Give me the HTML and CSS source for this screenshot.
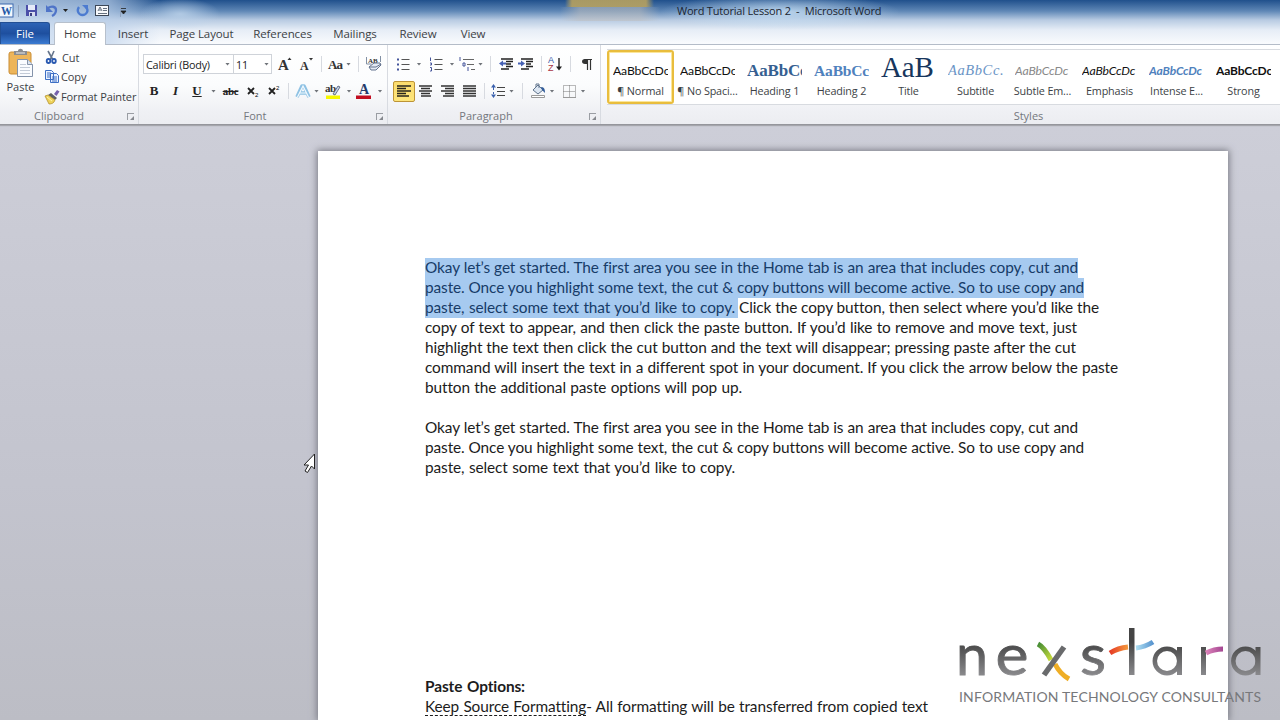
FILE: index.html
```html
<!DOCTYPE html>
<html lang="en">
<head>
<meta charset="utf-8">
<title>Word Tutorial Lesson 2 - Microsoft Word</title>
<link rel="stylesheet" href="styles.css">
</head>
<body>
<div class="app">
  <header class="chrome">
    <div class="titlebar">
      <div class="quick">
        <svg width="130" height="22" viewBox="0 0 130 22">
          <rect x="-2" y="4" width="15" height="13" fill="#f4f8fd" stroke="#3c68ae"/>
          <text x="1" y="15" class="w-logo" textLength="11" lengthAdjust="spacingAndGlyphs">W</text>
          <path d="M18.5 5v12M120.500 5v12" stroke="#8fa2bd"/>
          <path d="M26 5h11v11H26z" fill="#4b4fa8"/><path d="M28 5h7v5h-7z" fill="#e6eaf8"/><path d="M29 12h6v4h-6z" fill="#d8dcef"/><path d="M30 13h2v3h-2z" fill="#3a3f80"/>
          <path d="M48 8c3-2 8-2 8 2 0 3-2 5-4 6" fill="none" stroke="#4f74c8" stroke-width="2.300"/><path d="M46 5v7h7z" fill="#4f74c8"/>
          <path d="M63 9h5l-2.500 3z" fill="#222"/>
          <path d="M79 7c-3 4 0 8 3.500 8s7-4 3.500-8" fill="none" stroke="#4c7bd0" stroke-width="2.300"/><path d="M82 5h6v6z" fill="#4c7bd0"/>
          <rect x="95.500" y="5.500" width="13" height="10" fill="#f7f9fc" stroke="#3d4858"/>
          <path d="M98 11l2-4 2 4M99 10h2M103 8.500h4M103 10.500h4M98 13.500h9" fill="none" stroke="#536070" stroke-width=".9"/>
          <path d="M121 8.500h5M121 11h5l-2.500 3z" fill="#222" stroke="#222" stroke-width=".8"/>
        </svg>
      </div>
      <div class="title">Word Tutorial Lesson 2 &nbsp;-&nbsp; Microsoft Word</div>
    </div>
    <nav class="tabs">
      <span class="file">File</span><span class="tab active">Home</span><span class="tab t-insert">Insert</span><span class="tab t-layout">Page Layout</span><span class="tab t-ref">References</span><span class="tab t-mail">Mailings</span><span class="tab t-review">Review</span><span class="tab t-view">View</span>
    </nav>
  </header>

  <section class="ribbon">
    <div class="group clipboard">
      <div class="group-body clip-body">
        <div class="paste">
          <svg width="26" height="30" viewBox="0 0 26 30">
            <rect x="1" y="4" width="22" height="22" rx="2" fill="#edb55a" stroke="#c98d35"/>
            <path d="M6 7V3h4c0-3 5-3 5 0h4v4z" fill="#8a8c90"/><path d="M8 5h9" stroke="#e8e8e8"/>
            <path d="M9.500 11.500h10l5 5v12h-15z" fill="#fafcff" stroke="#8493aa"/><path d="M19.500 11.500v5h5" fill="#dbe3ee" stroke="#8493aa"/>
            <path d="M12 16.500h6M12 19.500h10M12 22.500h10M12 25.500h10" stroke="#c3cbd7"/>
          </svg>
          <span>Paste</span><i class="caret"></i>
        </div>
        <div class="clip-list">
          <div class="clip-row cut"><svg width="16" height="16" viewBox="0 0 16 16"><path d="M5 2l5 9M11 2l-4 9" stroke="#65758c" stroke-width="1.600"/><ellipse cx="5.500" cy="12" rx="1.800" ry="2" fill="none" stroke="#2858b0" stroke-width="1.800"/><ellipse cx="11" cy="12" rx="1.800" ry="2" fill="none" stroke="#2858b0" stroke-width="1.800"/></svg><span>Cut</span></div>
          <div class="clip-row copy"><svg width="16" height="16" viewBox="0 0 16 16"><path d="M1.500 2.500h6l2 2v7h-8zM6.500 5.500h6l2 2v7h-8z" fill="#eaf2ff" stroke="#3d6fc4"/><path d="M3 5h4M3 7h3M3 9h3M8 9h5M8 11h5M8 13h5" stroke="#3d6fc4"/></svg><span>Copy</span></div>
          <div class="clip-row painter"><svg width="16" height="16" viewBox="0 0 16 16"><path d="M10 5l3-4 2.500 1.500-3 4.500z" fill="#7560ac"/><path d="M7 4l6 5-2 2-7-5z" fill="#5e6064"/><path d="M4 6l7 5c-1 3-3 4-6 4L1 7z" fill="#eed25a" stroke="#ae8a25" stroke-width=".7"/><path d="M3 8l5 4" stroke="#fff6ae"/></svg><span>Format Painter</span></div>
        </div>
      </div>
      <div class="group-label">Clipboard<i class="launch"></i></div>
    </div>

    <div class="group font">
      <div class="group-body">
        <div class="row font-a">
          <span class="combo">Calibri (Body)<i class="caret"></i></span>
          <span class="combo size">11<i class="caret"></i></span>
          <svg width="16" height="18" viewBox="0 0 16 18"><text x="1" y="15" class="serif" font-size="15">A</text><path d="M10.500 5h4l-2-2.500z" fill="#333"/></svg>
          <svg width="16" height="18" viewBox="0 0 16 18"><text x="1" y="15" class="serif" font-size="12">A</text><path d="M10 3h4l-2 2.500z" fill="#333"/></svg>
          <i class="sep"></i>
          <svg width="18" height="18" viewBox="0 0 18 18"><text x="2" y="14" class="serif" font-size="13" textLength="15">Aa</text></svg>
          <i class="caret"></i><i class="sep"></i>
          <svg width="18" height="18" viewBox="0 0 18 18"><text x="3" y="8" class="serif" font-size="7">AB</text><path d="M1.500 2v7h5M15.500 1v6" fill="none" stroke="#8290a4"/><path d="M4 12l5-4h6l1 2-5 5H6z" fill="#e5eaf4" stroke="#65748f"/><path d="M4 12h7l5-3" fill="none" stroke="#65748f"/></svg>
        </div>
        <div class="row font-b">
          <b class="ser">B</b><i class="ser">I</i><u class="ser">U</u><i class="caret"></i>
          <s class="ser abc">abc</s>
          <svg width="16" height="16" viewBox="0 0 16 16"><path d="M3 5l6 6M9 5l-6 6" stroke="#222" stroke-width="1.800"/><text x="10" y="14" font-size="6" class="num">2</text></svg>
          <svg width="16" height="16" viewBox="0 0 16 16"><path d="M3 5l6 6M9 5l-6 6" stroke="#222" stroke-width="1.800"/><text x="10" y="7" font-size="6" class="num">2</text></svg>
          <i class="sep"></i>
          <svg width="18" height="18" viewBox="0 0 18 18"><path d="M3 15L8 4h2l5 11M5 11h8" fill="none" stroke="#8fc2e4" stroke-width="3.600" stroke-linejoin="round"/><path d="M3.500 15L9 4l5.500 11M6 11h6" fill="none" stroke="#f4fbff" stroke-width="1.200"/></svg>
          <i class="caret"></i>
          <svg width="18" height="18" viewBox="0 0 18 18"><path d="M2 13.500h14v3.500H2z" fill="#f7f700"/><text x="1" y="10" class="serif" font-size="11" textLength="11">ab</text><path d="M9 12l5-8 2 1-5 8z" fill="#c5d3ea" stroke="#49566e" stroke-width=".8"/></svg>
          <i class="caret"></i>
          <svg width="18" height="18" viewBox="0 0 18 18"><text x="4" y="12" class="serif" font-size="14" fill="#263b6c">A</text><path d="M1 13.500h15v3.500H1z" fill="#c20d20"/></svg>
          <i class="caret"></i>
        </div>
      </div>
      <div class="group-label">Font<i class="launch"></i></div>
    </div>

    <div class="group para">
      <div class="group-body">
        <div class="row para-a">
          <svg width="16" height="16" viewBox="0 0 16 16"><path d="M5.500 3.500h8M5.500 8.500h8M5.500 13.500h8" stroke="#555"/><path d="M1 2.500h2v2H1zM1 7.500h2v2H1zM1 12.500h2v2H1z" fill="#44549b"/></svg>
          <i class="caret"></i>
          <svg width="16" height="16" viewBox="0 0 16 16"><path d="M6.500 3.500h8M6.500 8.500h8M6.500 13.500h8" stroke="#555"/><path d="M2.500 1.500v3.500M2 7h1.500v2H2M2 11.500h1.500v3.500H2" fill="none" stroke="#44549b"/></svg>
          <i class="caret"></i>
          <svg width="18" height="16" viewBox="0 0 18 16"><path d="M5 3.500h11M9 8.500h7M13 13.500h4" stroke="#666"/><path d="M2 1v4M5 7h2v3H5zM10 11v4" fill="none" stroke="#44549b"/></svg>
          <i class="caret"></i><i class="sep"></i>
          <svg width="16" height="16" viewBox="0 0 16 16"><path d="M3 3h12M8 5.500h7M8 8h5M8 10.500h7M3 13h8" stroke="#222" stroke-width="1.500"/><path d="M1 7.500l4-3v2h3v2H5v2z" fill="#4560b4"/></svg>
          <svg width="16" height="16" viewBox="0 0 16 16"><path d="M3 3h12M8 5.500h7M8 8h5M8 10.500h7M3 13h8" stroke="#222" stroke-width="1.500"/><path d="M7 7.500l-4-3v2H0v2h3v2z" fill="#4560b4"/></svg>
          <i class="sep"></i>
          <svg width="16" height="18" viewBox="0 0 16 18"><text x="1" y="8" font-size="9" class="num" fill="#3558a8">A</text><text x="1" y="16" font-size="9" class="num" fill="#a83545">Z</text><path d="M12 3v10" stroke="#222" stroke-width="1.400"/><path d="M9 11.500h6l-3 4z" fill="#222"/></svg>
          <i class="sep"></i>
          <svg width="12" height="16" viewBox="0 0 12 16"><path d="M6 3H4C0 3 0 8 4 8h2z" fill="#333"/><path d="M3.500 3.500H11M6.500 3v11M9.500 3v11" fill="none" stroke="#333" stroke-width="1.200"/></svg>
        </div>
        <div class="row para-b">
          <span class="chosen"><svg width="16" height="16" viewBox="0 0 16 16"><path d="M1 3h14M1 5.500h9M1 8h14M1 10.500h9M1 13h12" stroke="#28261d" stroke-width="1.300"/></svg></span>
          <svg width="16" height="16" viewBox="0 0 16 16"><path d="M1 3h13M3 5.500h9M1 8h13M3 10.500h9M3 13h10" stroke="#333" stroke-width="1.300"/></svg>
          <svg width="16" height="16" viewBox="0 0 16 16"><path d="M1 3h13M5 5.500h9M1 8h13M5 10.500h9M3 13h11" stroke="#333" stroke-width="1.300"/></svg>
          <svg width="16" height="16" viewBox="0 0 16 16"><path d="M1 3h13M1 5.500h13M1 8h13M1 10.500h13M1 13h13" stroke="#333" stroke-width="1.300"/></svg>
          <i class="sep"></i>
          <svg width="16" height="16" viewBox="0 0 16 16"><path d="M7 4.500h8M7 8.500h8M7 12.500h8" stroke="#444" stroke-width="1.200"/><path d="M3.500 1L6 4.500H1zM3.500 15L6 11.500H1zM3 4h1v3H3zM3 9h1v3H3z" fill="#3b61ae"/></svg>
          <i class="caret"></i><i class="sep"></i>
          <svg width="18" height="18" viewBox="0 0 18 18"><path d="M4 8l5-5 5 5-5 4z" fill="#dce6f2" stroke="#61758d"/><path d="M7 5V2h3v4" fill="none" stroke="#61758d"/><path d="M12 5c3 0 4 2 4 6l-3-3z" fill="#345e9b"/><path d="M2.500 13.500h13v2h-13z" fill="#fff" stroke="#999"/></svg>
          <i class="caret"></i>
          <svg width="16" height="16" viewBox="0 0 16 16"><path d="M2.500 2.500h12v12h-12zM8.500 2.500v12M2.500 8.500h12" fill="none" stroke="#777" stroke-dasharray="1 1"/><path d="M2 14.500h13" stroke="#999"/></svg>
          <i class="caret"></i>
        </div>
      </div>
      <div class="group-label">Paragraph<i class="launch"></i></div>
    </div>

    <div class="group styles">
      <div class="gallery">
        <div class="style selected"><div class="sample">AaBbCcDc</div><span>¶ Normal</span></div>
        <div class="style"><div class="sample">AaBbCcDc</div><span>¶ No Spaci...</span></div>
        <div class="style"><div class="sample h1">AaBbCc</div><span>Heading 1</span></div>
        <div class="style"><div class="sample h2">AaBbCc</div><span>Heading 2</span></div>
        <div class="style"><div class="sample ttl">AaB</div><span>Title</span></div>
        <div class="style"><div class="sample sub">AaBbCc.</div><span>Subtitle</span></div>
        <div class="style"><div class="sample em pale">AaBbCcDc</div><span>Subtle Em...</span></div>
        <div class="style"><div class="sample em">AaBbCcDc</div><span>Emphasis</span></div>
        <div class="style"><div class="sample em intense">AaBbCcDc</div><span>Intense E...</span></div>
        <div class="style"><div class="sample strong">AaBbCcDc</div><span>Strong</span></div>
      </div>
      <div class="group-label">Styles</div>
    </div>
  </section>

  <main class="workspace">
    <article class="page">
      <div class="para-text">
        <p class="l1 sel">Okay let’s get started. The first area you see in the Home tab is an area that includes copy, cut and</p>
        <p class="l2 sel">paste. Once you highlight some text, the cut &amp; copy buttons will become active. So to use copy and</p>
        <div class="split"><p class="l3 sel">paste, select some text that you’d like to copy.</p><p class="l3b">Click the copy button, then select where you’d like the</p></div>
        <p class="l4">copy of text to appear, and then click the paste button. If you’d like to remove and move text, just</p>
        <p class="l5">highlight the text then click the cut button and the text will disappear; pressing paste after the cut</p>
        <p class="l6">command will insert the text in a different spot in your document. If you click the arrow below the paste</p>
        <p class="l7">button the additional paste options will pop up.</p>
      </div>
      <div class="para-text second">
        <p class="l1">Okay let’s get started. The first area you see in the Home tab is an area that includes copy, cut and</p>
        <p class="l2">paste. Once you highlight some text, the cut &amp; copy buttons will become active. So to use copy and</p>
        <p class="l3">paste, select some text that you’d like to copy.</p>
      </div>
      <div class="para-text options">
        <p class="l8">Paste Options:</p>
        <p class="l9"><span class="dash">Keep Source Formatting</span>- All formatting will be transferred from copied text</p>
      </div>
    </article>
  </main>

  <svg class="cursor" width="14" height="22" viewBox="0 0 14 22"><path d="M11.500 1v15l-3-3-4 6.500-2.500-1.500 3.500-6H1z" fill="#fff" stroke="#222"/></svg>

  <svg class="logo" width="310" height="84" viewBox="955 623 310 84" role="img" aria-label="nexstara">
    <defs>
      <linearGradient id="ink" gradientUnits="userSpaceOnUse" x1="0" y1="642" x2="0" y2="677"><stop offset="0" stop-color="#444"/><stop offset="1" stop-color="#8d8d90"/></linearGradient>
      <linearGradient id="green" x1="0" y1="0" x2="1" y2="1"><stop stop-color="#438b35"/><stop offset="1" stop-color="#c9dc3b"/></linearGradient>
      <linearGradient id="orange"><stop stop-color="#e63b26"/><stop offset="1" stop-color="#f49a3d"/></linearGradient>
      <linearGradient id="blue"><stop stop-color="#b0e0f3"/><stop offset="1" stop-color="#5794cf"/></linearGradient>
      <linearGradient id="pink"><stop stop-color="#dd83ba"/><stop offset="1" stop-color="#a34691"/></linearGradient>
    </defs>
    <g class="wordmark" fill="url(#ink)" stroke="url(#ink)" stroke-width=".8">
      <text x="956" y="675" textLength="32" lengthAdjust="spacingAndGlyphs">n</text>
      <text x="995.500" y="675" textLength="33" lengthAdjust="spacingAndGlyphs">e</text>
      <text x="1080" y="675" textLength="26" lengthAdjust="spacingAndGlyphs">s</text>
    </g>
    <path d="M1038 644q6 3 13 16" fill="none" stroke="url(#green)" stroke-width="5"/>
    <path d="M1055 664q5 10 14 15" fill="none" stroke="#efae26" stroke-width="5"/>
    <path d="M1064 647l-20 28" stroke="#696a6c" stroke-width="5.500"/>
    <path d="M1110 653q8-5 18-6" fill="none" stroke="url(#orange)" stroke-width="5"/>
    <path d="M1136 648q9-1 17-6" fill="none" stroke="url(#blue)" stroke-width="5"/>
    <path d="M1129 628h5.500v47h-5.500zM1201 647h5v28h-5zM1177 647h5v28h-5zM1255.500 647h5v28h-5z" fill="url(#ink)"/>
    <circle cx="1167" cy="661" r="12.200" fill="none" stroke="url(#ink)" stroke-width="4.500"/>
    <circle cx="1245.500" cy="661" r="12.200" fill="none" stroke="url(#ink)" stroke-width="4.500"/>
    <path d="M1206 653q8-4 17-4" fill="none" stroke="url(#pink)" stroke-width="5"/>
    <text class="tagline" x="959" y="701.500" textLength="302">INFORMATION TECHNOLOGY CONSULTANTS</text>
  </svg>
</div>
</body>
</html>
```
FILE: styles.css
```css
* { box-sizing: border-box; }
body { margin: 0; font-family: "Open Sans", "Noto Sans", sans-serif; font-size: 11px; color: #3c3f45; }
.app { position: relative; width: 1280px; height: 720px; overflow: hidden; display: flex; flex-direction: column; }

.chrome {
  flex: none; height: 45px; border-bottom: 1px solid #b4bcc8;
  background:
    linear-gradient(90deg, transparent 565px, rgba(183,161,95,.9) 572px, rgba(183,161,95,.9) 646px, transparent 654px) 0 0 / 100% 7px no-repeat,
    linear-gradient(90deg, transparent 560px, rgba(190,190,190,.55) 580px, rgba(190,190,190,.55) 640px, transparent 660px) 0 7px / 100% 14px no-repeat,
    radial-gradient(ellipse 120px 18px at 780px 12px, rgba(200,224,244,.85), transparent),
    radial-gradient(ellipse 40px 16px at 180px 14px, rgba(190,212,235,.8), transparent),
    linear-gradient(90deg, rgba(204,221,241,.75), rgba(190,210,235,.65) 110px, transparent 160px),
    linear-gradient(#20508c, #5f87b6 11px, #b8cbe2 20px, #e6edf6 30px, #f8fafd 43px);
}
.titlebar { height: 22px; display: flex; }
.quick { width: 677px; height: 22px; }
.w-logo { font: bold 13px "Liberation Serif", serif; fill: #2457a5; }
.title { color: #1b2430; line-height: 22px; white-space: nowrap; letter-spacing: -.2px; }
.tabs { height: 22px; display: flex; align-items: stretch; line-height: 23px; font-size: 11.500px; letter-spacing: -.1px; text-align: center; white-space: nowrap; }
.file { width: 50px; color: #fff; background: linear-gradient(#2d63b5, #1e4f9f 50%, #3b7bd2); border: 1px solid #224f94; border-bottom: 0; border-radius: 0 3px 0 0; line-height: 22px; }
.active { width: 52px; height: 23px; margin-left: 4px; background: #fff; border: 1px solid #b7c0cc; border-bottom: 0; border-radius: 3px 3px 0 0; line-height: 22px; }
.t-insert { width: 54px; }
.t-layout { width: 83px; }
.t-ref { width: 79px; }
.t-mail { width: 66px; }
.t-review { width: 60px; }
.t-view { width: 50px; }

.ribbon { position: relative; flex: none; height: 80px; display: flex; background: linear-gradient(#fff, #fbfcfd 50%, #eff0f4 85%, #ecedf1); border-bottom: 1px solid #95969c; box-shadow: 0 1px 1px #a5a6ac; }
.group { display: flex; flex-direction: column; justify-content: space-between; border-right: 1px solid #d8dbe1; }
.clipboard { width: 139px; }
.font { width: 249px; }
.para { width: 213px; }
.styles { flex: 1; min-width: 0; border: 0; padding-left: 6px; }
.group-body { height: 62px; padding: 8px 0 0 4px; }
.group-label { position: relative; height: 15px; line-height: 13px; text-align: center; color: #74777d; font-size: 11px; padding-right: 20px; }
.font .group-label, .para .group-label { padding-right: 16px; }
.styles .group-label { padding: 0 0 0 170px; }
.launch { position: absolute; right: 4px; top: 4px; width: 7px; height: 7px; border: solid #9a9da3; border-width: 1px 0 0 1px; }
.launch::after { content: ""; position: absolute; right: 0; bottom: 0; border: 2px solid #85888e; border-top-color: transparent; border-left-color: transparent; }

.clip-body { display: flex; padding: 3px 0 0 0; }
.paste { width: 41px; display: flex; flex-direction: column; align-items: center; line-height: 18px; }
.paste .caret { margin-top: 2px; }
.clip-list { display: flex; flex-direction: column; }
.clip-row { height: 20.500px; display: flex; align-items: center; white-space: nowrap; font-size: 11px; letter-spacing: -.1px; }
.clip-row svg { margin: 0 1px 0 3px; flex: none; }
.cut { height: 18px; }
.cut svg { margin-left: 2px; margin-right: 3px; }
.caret { width: 5px; height: 3px; background: #70747a; clip-path: polygon(0 0, 100% 0, 50% 100%); }
.sep { width: 1px; height: 16px; background: #d7dae0; }
.row { display: grid; align-items: center; justify-items: center; }
.font-a { height: 22px; grid-template-columns: 91px 38px 25px 20px 8px 20px 7px 12px 20px; }
.font-b { height: 22px; margin-top: 5px; grid-template-columns: 22px 21px 22px 11px 23px 21px 22px 7px 21px 7px 26px 6px 24px 8px; }
.para-a { height: 22px; margin-left: 1px; grid-template-columns: 22px 8px 26px 6px 23px 5px 14px 18px 21px 10px 18px 13px 19px; }
.para-b { height: 22px; margin: 5px 0 0 1px; grid-template-columns: 22px 22px 22px 22px 6px 21px 7px 14px 18px 10px 23px 6px; }
.combo { width: 100%; height: 20px; display: flex; align-items: center; justify-content: space-between; padding: 0 3px 0 2px; background: #fff; border: 1px solid #cfd3d9; white-space: nowrap; color: #222; font-size: 10.800px; letter-spacing: -.2px; }
.size { border-left: 0; padding-right: 2px; }
.ser, .serif { font-family: "Liberation Serif", serif; font-weight: bold; }
.serif:not([fill]) { fill: #333; }
.ser { color: #222; font-size: 13px; line-height: 16px; }
.abc { font-size: 11px; letter-spacing: -.3px; }
.num { font-family: "Liberation Sans", sans-serif; }
.chosen { width: 22px; height: 21px; display: flex; align-items: center; justify-content: center; background: linear-gradient(#fbdc6e, #fde57b); border: 1px solid #bd9436; border-radius: 2px; }

.gallery { height: 56px; margin-top: 4px; display: flex; border: solid #d8dbe0; border-width: 1px 0 1px 0; background: #fff; }
.style { flex: 0 0 67px; min-width: 0; height: 54px; display: flex; flex-direction: column; align-items: center; font-size: 10.800px; letter-spacing: -.15px; white-space: nowrap; }
.selected { border: 2px solid #e9bd3d; border-radius: 3px; box-shadow: inset 0 0 0 1px #fbe69b; }
.selected .sample { margin-top: -2px; }
.style > span { line-height: 18px; }
.sample { width: 55px; height: 32px; overflow: hidden; font: 12.200px/41px Lato, sans-serif; color: #111; }
.h1 { font: bold 17px/41px "Liberation Serif", serif; color: #365f91; }
.h2 { font: bold 15.500px/41px "Liberation Serif", serif; color: #4f81bd; }
.ttl { font: 29px/34px "Liberation Serif", serif; color: #17365d; }
.sub { font: italic 14.500px/41px "Liberation Serif", serif; color: #6a94c6; letter-spacing: .6px; }
.em { font-style: italic; }
.pale { color: #888; }
.intense { color: #4f81bd; font-weight: bold; }
.strong { font-weight: bold; }
.intense, .strong { font-size: 12px; }

.workspace { flex: 1; min-height: 0; padding: 26px 52px 0 318px; background: linear-gradient(#cdced8, #c3c4ce 60%, #bcbdc5); }
.page { height: 569px; padding: 107px 0 0 107px; background: #fff; box-shadow: 0 0 7px 1px #777882; }
.para-text { font: 15.400px/20px Lato, sans-serif; color: #1c1c1c; }
.para-text p { margin: 0; height: 20px; line-height: 19px; white-space: nowrap; text-align: justify; text-align-last: justify; letter-spacing: -.1px; }
.split { display: flex; gap: 1px; }
.para-text .sel { background: #a6caf0; color: #173c68; }
.second { margin-top: 20px; }
.options { margin-top: 199px; }
.l1 { width: 653px; }
.l2 { width: 659px; }
.l3 { width: 313px; padding-right: 3px; }
.l3b { width: 360px; }
.l4 { width: 652px; }
.l5 { width: 651px; }
.l6 { width: 693px; }
.l7 { width: 317px; }
.l8 { width: 100px; font-weight: bold; }
.l9 { width: 503px; }
.dash { text-decoration: underline dashed 1px; text-underline-offset: 3px; }

.cursor { position: absolute; left: 303px; top: 453px; }
.logo { position: absolute; left: 955px; top: 623px; }
.wordmark { font: 56px Lato, sans-serif; }
.tagline { font: 14px Lato, sans-serif; fill: #77787b; }
```
